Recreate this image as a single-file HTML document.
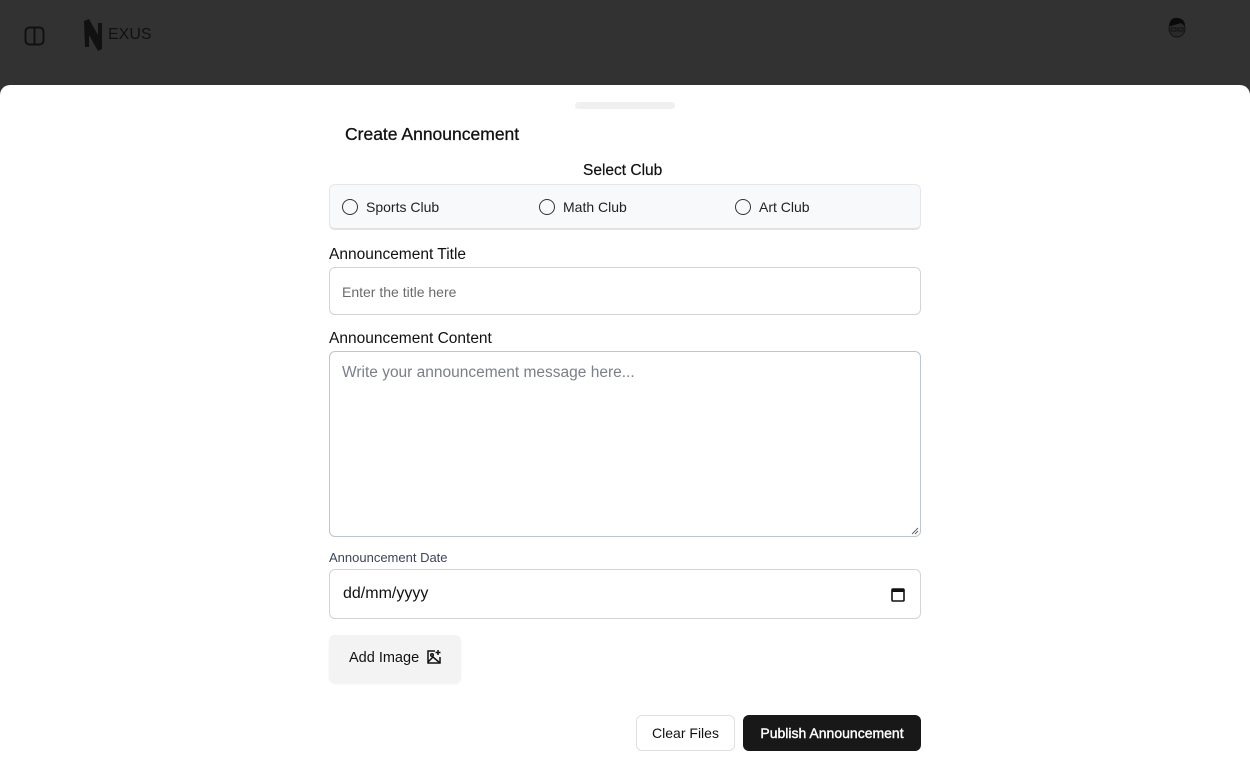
<!DOCTYPE html>
<html><head><meta charset="utf-8"><style>
*{box-sizing:border-box;margin:0;padding:0}
html{overflow:hidden;height:768px}
body{width:1250px;height:768px;background:#323232;font-family:"Liberation Sans",sans-serif;overflow:hidden;position:relative;color:#111}
.abs{position:absolute}
.sheet{position:absolute;left:0;top:85px;width:1250px;height:683px;background:#fff;border-radius:10px 10px 0 0}
.lbl{position:absolute;left:329px;font-size:15.5px;color:#111}
.box{position:absolute;left:329px;width:592px;border:1px solid #d4d4d8;border-radius:6px;background:#fff}
.radio{position:absolute;top:199px;width:16px;height:16px;border:1.3px solid #333;border-radius:50%}
.rt{position:absolute;top:199px;font-size:14px;color:#222}
</style></head><body>
<svg class="abs" style="left:24px;top:26px" width="22" height="20" viewBox="0 0 22 20"><rect x="1.5" y="1.5" width="18" height="17" rx="4" fill="none" stroke="#111" stroke-width="2"/><line x1="10.5" y1="2" x2="10.5" y2="18" stroke="#111" stroke-width="2"/></svg>
<svg class="abs" style="left:83px;top:18px" width="22" height="34" viewBox="0 0 22 34"><path d="M1 3 L6 1 L15 17 L15 5 L19 5 L19 31 L15 33 L6 17 L6 29 L2 29 Z" fill="#111"/></svg>
<div class="abs" style="left:108px;top:26px;font-size:16px;color:#111">EXUS</div>
<svg class="abs" style="left:1165px;top:15px" width="24" height="28" viewBox="0 0 24 28"><circle cx="12" cy="14" r="8" fill="#2a2a2a" stroke="#151515"/><path d="M4 11 Q5 2 13 3 Q20 4 20 11 L16 8 L6 11Z" fill="#0a0a0a"/><rect x="6" y="13" width="5" height="3" fill="none" stroke="#111"/><rect x="13" y="13" width="5" height="3" fill="none" stroke="#111"/></svg>
<div class="sheet"></div>
<div class="abs" style="left:575px;top:102px;width:100px;height:7px;border-radius:4px;background:#f0f0f0"></div>
<div class="abs" style="left:345px;top:124px;font-size:17.5px;color:#111;-webkit-text-stroke:0.3px #111">Create Announcement</div>
<div class="abs" style="left:583px;top:162px;font-size:15.5px;color:#111;-webkit-text-stroke:0.2px #111">Select Club</div>
<div class="abs" style="left:329px;top:184px;width:592px;height:46px;background:#f8f9fb;border:1px solid #e5e7eb;border-bottom:2px solid #e2e2e2;border-radius:6px"></div>
<div class="radio" style="left:342px"></div><div class="rt" style="left:366px">Sports Club</div>
<div class="radio" style="left:539px"></div><div class="rt" style="left:563px">Math Club</div>
<div class="radio" style="left:735px"></div><div class="rt" style="left:759px">Art Club</div>
<div class="lbl" style="top:246px">Announcement Title</div>
<div class="box" style="top:267px;height:48px"><span class="abs" style="left:12px;top:16px;font-size:14px;color:#6b6b6b">Enter the title here</span></div>
<div class="lbl" style="top:330px">Announcement Content</div>
<div class="box" style="top:351px;height:186px;border-color:#b9c6d6"><span class="abs" style="left:12px;top:12px;font-size:15.5px;color:#7a7f88">Write your announcement message here...</span>
<svg class="abs" style="right:1px;bottom:1px" width="8" height="8"><path d="M7 1 L1 7 M7 4 L4 7" stroke="#666"/></svg></div>
<div class="lbl" style="top:550px;font-size:13px;color:#3b4560">Announcement Date</div>
<div class="box" style="top:569px;height:50px"><span class="abs" style="left:13px;top:15px;font-size:16px;color:#111">dd/mm/yyyy</span>
<svg class="abs" style="left:561px;top:17px" width="14" height="15"><rect x="1" y="2" width="12" height="12" rx="1" fill="none" stroke="#111" stroke-width="1.6"/><rect x="1" y="2" width="12" height="3" fill="#111"/></svg></div>
<div class="abs" style="left:329px;top:635px;width:132px;height:48px;background:#f3f3f3;border-radius:6px;box-shadow:0 1px 2px rgba(0,0,0,.06)"><span class="abs" style="left:20px;top:15px;font-size:14.5px">Add Image</span>
<svg class="abs" style="left:97px;top:14px" width="16" height="16" viewBox="0 0 16 16" fill="none" stroke="#111" stroke-width="1.5"><path d="M9 2H2v12h12V8"/><circle cx="6" cy="6" r="1.3"/><path d="M2 13l5-5 7 6"/><path d="M12 1v5M9.5 3.5h5"/></svg></div>
<div class="abs" style="left:636px;top:715px;width:99px;height:36px;border:1px solid #e0e0e0;border-radius:6px;font-size:14px;text-align:center;line-height:34px">Clear Files</div>
<div class="abs" style="left:743px;top:715px;width:178px;height:36px;background:#181818;border-radius:6px;font-size:14px;color:#fff;text-align:center;line-height:36px;-webkit-text-stroke:0.4px #fff">Publish Announcement</div>
</body></html>
